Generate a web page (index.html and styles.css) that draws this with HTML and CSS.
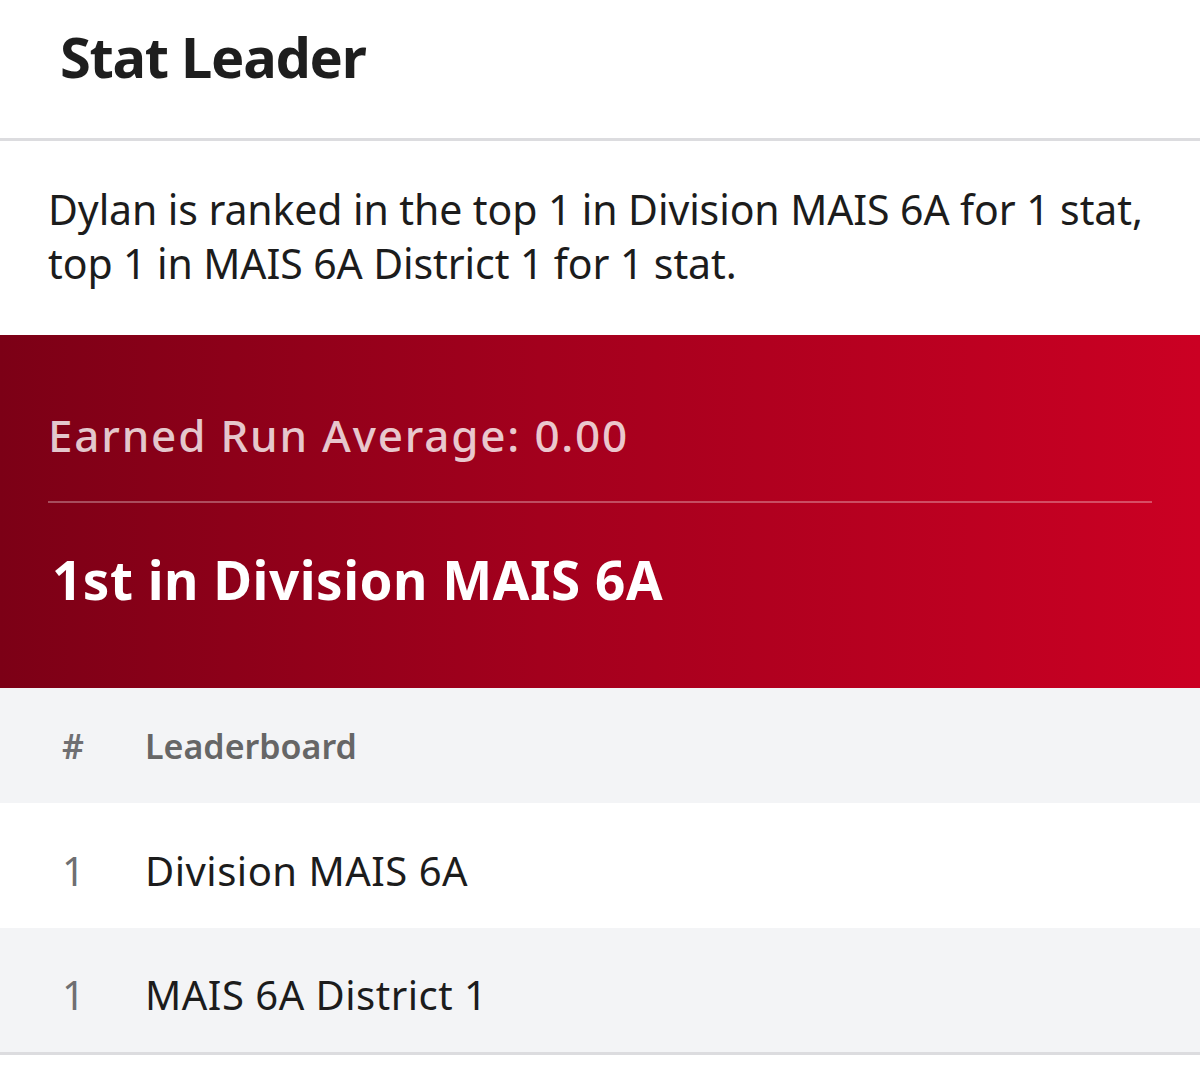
FILE: index.html
```html
<!DOCTYPE html>
<html>
<head>
  <meta charset="UTF-8">
  <title>Stat Leader</title>
  <link rel="stylesheet" href="styles.css">
</head>
<body>
<div class="page">
  <div class="header">
    <h1>Stat Leader</h1>
  </div>

  <p class="summary">Dylan is ranked in the top 1 in Division MAIS 6A for 1 stat, top 1 in MAIS 6A District 1 for 1 stat.</p>

  <div class="stat-card">
    <div class="stat-name">Earned Run Average: 0.00</div>
    <div class="stat-rank">1st in Division MAIS 6A</div>
  </div>

  <table class="board">
    <thead>
      <tr>
        <th class="num">#</th>
        <th>Leaderboard</th>
      </tr>
    </thead>
    <tbody>
      <tr>
        <td class="num">1</td>
        <td>Division MAIS 6A</td>
      </tr>
      <tr>
        <td class="num">1</td>
        <td>MAIS 6A District 1</td>
      </tr>
    </tbody>
  </table>
</div>
</body>
</html>
```

FILE: styles.css
```css
body {
  margin: 0;
  padding: 0;
  background-color: #fff;
  font-family: "Noto Sans", "Open Sans", sans-serif;
  color: #222;
}

.page {
  width: 1200px;
}

.header {
  height: 141px;
  border-bottom: 3px solid #dcdcdf;
  box-sizing: border-box;
  padding: 18px 0 0 60px;
}

h1 {
  margin: 0;
  font-size: 56px;
  font-weight: 700;
  letter-spacing: -1.3px;
  color: #1e1e1e;
}

.summary {
  margin: 0;
  padding: 41px 48px 45px 48px;
  font-size: 41px;
  line-height: 54px;
  letter-spacing: -0.1px;
  color: #1c1c1c;
}

.stat-card {
  height: 353px;
  box-sizing: border-box;
  padding: 70px 48px 0 48px;
  background: linear-gradient(to right, #7c0016 0%, #a3001d 45%, #cb0023 100%);
}

.stat-name {
  font-size: 44px;
  font-weight: 500;
  color: rgba(255, 255, 255, 0.78);
  letter-spacing: 1.8px;
  padding-bottom: 36px;
  border-bottom: 2px solid rgba(255, 255, 255, 0.3);
}

.stat-rank {
  margin-top: 40px;
  padding-left: 4px;
  font-size: 53px;
  font-weight: 700;
  color: #fff;
  letter-spacing: 0.5px;
}

.board {
  width: 100%;
  border-collapse: collapse;
  border-bottom: 3px solid #dcdcdf;
}

.board th,
.board td {
  text-align: left;
  padding: 0;
}

.board th {
  height: 115px;
  font-size: 34px;
  font-weight: 600;
  color: #666;
  background-color: #f3f4f6;
}

.board td {
  height: 125px;
  box-sizing: border-box;
  padding-top: 10px;
  font-size: 40px;
  letter-spacing: 0.5px;
  color: #1c1c1c;
}

.board tbody tr:nth-child(2) td {
  background-color: #f3f4f6;
}

.board .num {
  width: 83px;
  padding-left: 62px;
  color: #6f6f72;
}
```
